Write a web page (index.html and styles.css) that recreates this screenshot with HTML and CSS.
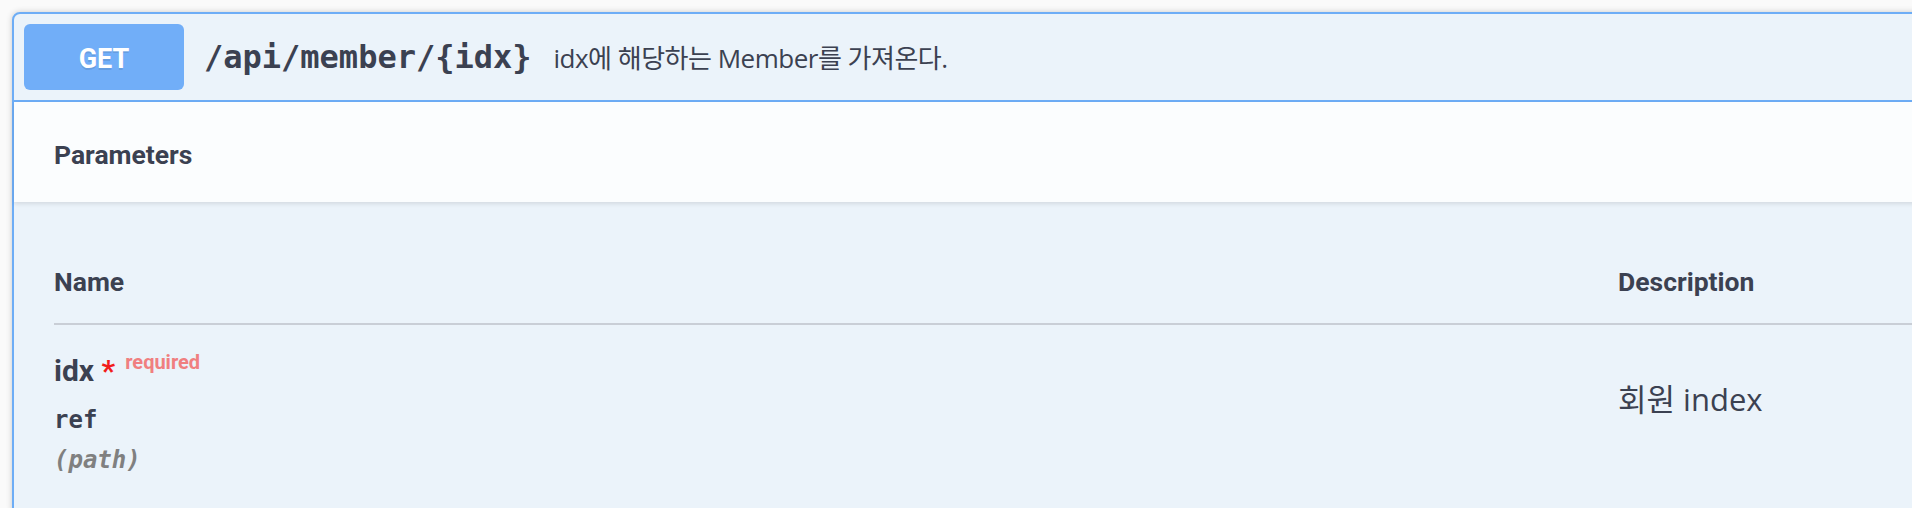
FILE: index.html
```html
<!DOCTYPE html>
<html lang="ko">
<head>
<meta charset="utf-8">
<title>GET /api/member/{idx}</title>
<link rel="stylesheet" href="styles.css">
</head>
<body>
<div class="page">
  <div class="opblock">
    <div class="summary">
      <span class="method">GET</span>
      <span class="path">/api/member/{idx}</span>
      <div class="summary-desc">idx에 해당하는 Member를 가져온다.</div>
    </div>
    <div class="section-header">
      <h4 class="section-title">Parameters</h4>
    </div>
    <div class="table-container">
      <table class="parameters">
        <thead>
          <tr>
            <th class="col-name">Name</th>
            <th class="col-desc">Description</th>
          </tr>
        </thead>
        <tbody>
          <tr>
            <td class="cell-name">
              <div class="param-name">idx<span class="star">&nbsp;*</span><span class="required">required</span></div>
              <div class="param-type">ref</div>
              <div class="param-in">(path)</div>
            </td>
            <td class="cell-desc">
              <p class="desc-text">회원 index</p>
            </td>
          </tr>
        </tbody>
      </table>
    </div>
  </div>
</div>
</body>
</html>
```

FILE: styles.css
```css
html, body {
  margin: 0;
  padding: 0;
  overflow: hidden;
  background: #fafafa;
}

.page {
  padding: 12px 0 0 12px;
}

.opblock {
  width: 1960px;
  border: 2px solid #6dadf6;
  border-radius: 8px;
  background: #ebf3fa;
  box-shadow: 0 0 6px rgba(0, 0, 0, 0.19);
  color: #3b4151;
}

.summary {
  display: flex;
  align-items: center;
  padding: 10px;
  border-bottom: 2px solid #6dadf6;
}

.method {
  min-width: 160px;
  box-sizing: border-box;
  padding: 14px 30px 10px;
  line-height: 42px;
  text-align: center;
  border-radius: 6px;
  background: #71aef8;
  color: #fff;
  font-family: Roboto, "Noto Sans", sans-serif;
  font-weight: 700;
  font-size: 27px;
  text-shadow: 0 2px 0 rgba(0, 0, 0, 0.1);
}

.path {
  padding: 0 22px 0 20px;
  font-family: "DejaVu Sans Mono", "Liberation Mono", monospace;
  font-weight: 700;
  font-size: 32px;
  color: #3b4151;
}

.summary-desc {
  flex: 1;
  font-family: "Open Sans", "Noto Sans CJK KR", sans-serif;
  font-size: 26px;
  letter-spacing: -0.5px;
  color: #3b4151;
}

.section-header {
  display: flex;
  align-items: center;
  min-height: 100px;
  box-sizing: border-box;
  padding: 16px 40px;
  background: rgba(255, 255, 255, 0.8);
  box-shadow: 0 2px 4px rgba(0, 0, 0, 0.1);
}

.section-title {
  margin: 0;
  padding-top: 6px;
  font-family: Roboto, "Noto Sans", sans-serif;
  font-weight: 700;
  font-size: 26.5px;
  line-height: 36px;
  color: #3b4151;
}

.table-container {
  padding: 40px;
}

.parameters {
  border-collapse: collapse;
  table-layout: fixed;
  width: 1876px;
}

.parameters th {
  padding: 23px 0 24px;
  text-align: left;
  font-family: Roboto, "Noto Sans", sans-serif;
  font-weight: 700;
  font-size: 26.5px;
  line-height: 34px;
  color: #3b4151;
  border-bottom: 2px solid #c9ced6;
}

.col-name {
  width: 1564px;
}

.parameters td {
  vertical-align: top;
  padding: 21px 0 0;
}

.param-name {
  font-family: Roboto, "Noto Sans", sans-serif;
  font-weight: 700;
  font-size: 30px;
  line-height: 50px;
  color: #3b4151;
}

.star {
  color: #f21c1c;
  font-size: 30px;
}

.required {
  position: relative;
  top: -12px;
  padding: 10px;
  font-size: 20px;
  font-weight: 700;
  color: #f07f80;
}

.param-type {
  padding: 7px 0 12px;
  font-family: "DejaVu Sans Mono", "Liberation Mono", monospace;
  font-weight: 700;
  font-size: 24px;
  line-height: 28px;
  color: #3b4151;
}

.param-in {
  font-family: "DejaVu Sans Mono", "Liberation Mono", monospace;
  font-weight: 700;
  font-style: italic;
  font-size: 24px;
  line-height: 28px;
  color: #808080;
}

.desc-text {
  margin: 31px 0 0;
  font-family: "Open Sans", "Noto Sans CJK KR", sans-serif;
  font-size: 31px;
  line-height: 45px;
  color: #3b4151;
}
```
